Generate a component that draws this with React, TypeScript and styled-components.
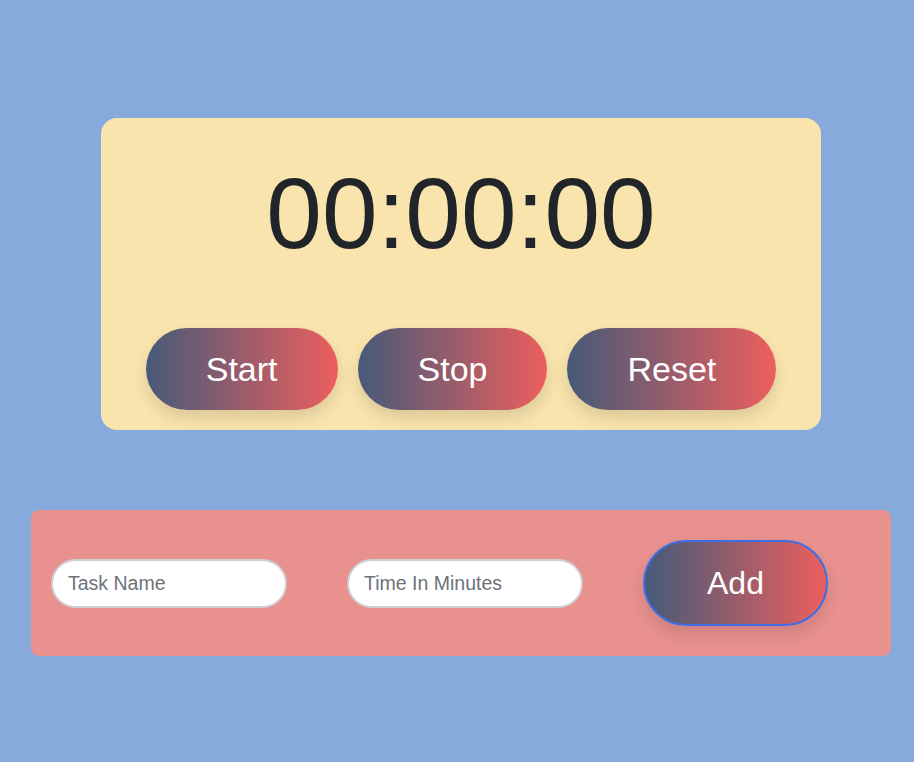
import styled, { createGlobalStyle } from "styled-components";

const GlobalStyle = createGlobalStyle`
	* {
		box-sizing: border-box;
	}
	html,
	body {
		margin: 0;
		background-color: #86aadc;
		font-family: "Liberation Sans", Arial, Helvetica, sans-serif;
	}
`;

const Page = styled.main`
	width: 914px;
	min-height: 762px;
	padding: 118px 0 0 8px;
	display: flex;
	flex-direction: column;
	align-items: center;
	gap: 80px;
`;

const TimerCard = styled.section`
	width: 720px;
	height: 312px;
	background-color: #f9e4ad;
	border-radius: 16px;
	padding-top: 45px;
	display: flex;
	flex-direction: column;
	align-items: center;
`;

const Clock = styled.h1`
	margin: 0;
	font-size: 100px;
	line-height: 100px;
	font-weight: 400;
	color: #212529;
`;

const ButtonRow = styled.div`
	margin-top: 65px;
	display: flex;
	gap: 20px;
`;

const GradientButton = styled.button<{ $size: number; $outlined?: boolean }>`
	border: ${(p) => (p.$outlined ? "2px solid #3c6fe6" : "none")};
	border-radius: 999px;
	background: linear-gradient(to right, #465a79, #ec5f5d);
	color: #ffffff;
	font-family: "Liberation Sans", Arial, sans-serif;
	font-size: ${(p) => p.$size}px;
	line-height: 1;
	cursor: pointer;
	box-shadow: 0 8px 16px rgba(0, 0, 0, 0.12);
`;

const TimerButton = styled(GradientButton)`
	height: 82px;
	padding: 0 60px;
`;

const AddButton = styled(GradientButton)`
	height: 86px;
	padding: 0 62px;
`;

const TaskPanel = styled.section`
	width: 860px;
	background-color: #e8918f;
	border-radius: 8px;
	padding: 30px 20px;
	display: flex;
	align-items: center;
	gap: 60px;
`;

const TaskInput = styled.input`
	width: 236px;
	height: 49px;
	border: 2px solid #cfcfd3;
	border-radius: 999px;
	background: #ffffff;
	padding: 0 15px;
	font-family: "Liberation Sans", Arial, sans-serif;
	font-size: 19.5px;
	color: #212529;
	outline: none;
	&::placeholder {
		color: #6c737b;
	}
`;

const App = () => {
	return (
		<>
			<GlobalStyle />
			<Page>
				<TimerCard>
					<Clock>00:00:00</Clock>
					<ButtonRow>
						<TimerButton $size={34}>Start</TimerButton>
						<TimerButton $size={34}>Stop</TimerButton>
						<TimerButton $size={34}>Reset</TimerButton>
					</ButtonRow>
				</TimerCard>
				<TaskPanel>
					<TaskInput placeholder="Task Name" />
					<TaskInput placeholder="Time In Minutes" />
					<AddButton $size={32} $outlined>
						Add
					</AddButton>
				</TaskPanel>
			</Page>
		</>
	);
};

export default App;
